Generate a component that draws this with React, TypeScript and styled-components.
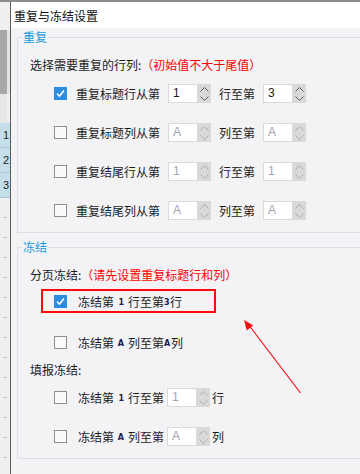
import React from 'react';
import styled, { createGlobalStyle } from 'styled-components';

// ---------------------------------------------------------------------------
// Repeat / freeze settings dialog, sitting over a spreadsheet
// ---------------------------------------------------------------------------

const GlobalStyle = createGlobalStyle`
  html, body {
    margin: 0;
    padding: 0;
  }
  body {
    font-family: 'Noto Sans CJK SC', 'Noto Sans', sans-serif;
    font-size: 12px;
    color: #1b1b1b;
  }
`;

const ChevronUp = ({ color }: { color: string }) => (
  <svg width="9" height="5" viewBox="0 0 9 5">
    <polyline points="0.5,4.5 4.5,0.5 8.5,4.5" fill="none" stroke={color} strokeWidth="1" />
  </svg>
);

const ChevronDown = ({ color }: { color: string }) => (
  <svg width="9" height="5" viewBox="0 0 9 5">
    <polyline points="0.5,0.5 4.5,4.5 8.5,0.5" fill="none" stroke={color} strokeWidth="1" />
  </svg>
);

const Checkbox = ({ checked }: { checked?: boolean }) => (
  <CheckBoxBox $checked={!!checked}>
    {checked && (
      <svg width="11" height="11" viewBox="0 0 11 11">
        <polyline points="2,5.5 4.5,8 9,2.5" fill="none" stroke="#fff" strokeWidth="1.6" />
      </svg>
    )}
  </CheckBoxBox>
);

const Spinner = ({ value, disabled }: { value: string; disabled?: boolean }) => (
  <SpinBox>
    <SpinInput $disabled={!!disabled}>{value}</SpinInput>
    <SpinButtons>
      <ChevronUp color={disabled ? '#ababab' : '#5a5a5a'} />
      <ChevronDown color={disabled ? '#ababab' : '#5a5a5a'} />
    </SpinButtons>
  </SpinBox>
);

const repeatRows = [
  { label: '重复标题行从第', from: '1', to: '3', mid: '行至第', checked: true },
  { label: '重复标题列从第', from: 'A', to: 'A', mid: '列至第' },
  { label: '重复结尾行从第', from: '1', to: '1', mid: '行至第' },
  { label: '重复结尾列从第', from: 'A', to: 'A', mid: '列至第' },
];

const App = () => {
  return (
    <>
      <GlobalStyle />
      <Screen>
        <SheetStrip>
          <SheetBlock $h={28} $bg="#efefef" />
          <SheetBlock $h={64} $bg="#a7a7a7" $edge="#e4e4e4" />
          <SheetBlock $h={29} $bg="#e6e6e6" $edge="#f0f0f0" />
          <RowHead $h={25}>1</RowHead>
          <RowHead $h={25}>2</RowHead>
          <RowHead $h={25}>3</RowHead>
          {Array.from({ length: 14 }).map((_, i) => (
            <EmptyRowHead key={i} />
          ))}
        </SheetStrip>

        <Dialog>
          <TitleBar>重复与冻结设置</TitleBar>
          <Body>
            <Group>
              <Legend>重复</Legend>
              <GroupContent>
                <Heading $h={19} $top={10}>
                  选择需要重复的行列:<Hint>（初始值不大于尾值）</Hint>
                </Heading>
                {repeatRows.map((r) => (
                  <Row key={r.label} $h={39} $gap={8}>
                    <Checkbox checked={r.checked} />
                    <Label $left={1}>{r.label}</Label>
                    <Spinner value={r.from} disabled={!r.checked} />
                    <Label>{r.mid}</Label>
                    <Spinner value={r.to} disabled={!r.checked} />
                  </Row>
                ))}
              </GroupContent>
            </Group>

            <Group $top={6}>
              <Legend>冻结</Legend>
              <GroupContent>
                <Heading $h={19} $top={10}>
                  分页冻结:<Hint>（请先设置重复标题行和列）</Hint>
                </Heading>
                <Highlight>
                  <Row $h={20} $gap={11} $indent={11}>
                    <Checkbox checked />
                    <Label>
                      冻结第<Num $w={14}>1</Num>行至第<Num $w={6}>3</Num>行
                    </Label>
                  </Row>
                </Highlight>
                <Row $h={38} $gap={11}>
                  <Checkbox />
                  <Label>
                    冻结第<Num $w={14}>A</Num>列至第<Num $w={7}>A</Num>列
                  </Label>
                </Row>
                <Heading $h={17}>填报冻结:</Heading>
                <Row $h={39} $gap={11}>
                  <Checkbox />
                  <Label>
                    冻结第<Num $w={14}>1</Num>行至第
                  </Label>
                  <Tail>
                    <Spinner value="1" disabled />
                    <Label>行</Label>
                  </Tail>
                </Row>
                <Row $h={39} $gap={11}>
                  <Checkbox />
                  <Label>
                    冻结第<Num $w={14}>A</Num>列至第
                  </Label>
                  <Tail>
                    <Spinner value="A" disabled />
                    <Label>列</Label>
                  </Tail>
                </Row>
              </GroupContent>
            </Group>
          </Body>
        </Dialog>

        {/* red annotation arrow drawn over the dialog */}
        <Annotation width="360" height="474" viewBox="0 0 360 474">
          <line x1="300.5" y1="391" x2="248" y2="322" stroke="#f01010" strokeWidth="1.2" />
          <polygon points="244,318 253.2,323.6 246.8,328.4" fill="#f01010" />
        </Annotation>
      </Screen>
    </>
  );
};

// ---------------------------------------------------------------------------
// Styled components
// ---------------------------------------------------------------------------

const Screen = styled.div`
  position: relative;
  display: flex;
  width: 360px;
  height: 474px;
  overflow: hidden;
  box-sizing: border-box;
  border-top: 2px solid #8c8c8c;
  background: #efefef;
`;

const SheetStrip = styled.div`
  display: flex;
  flex-direction: column;
  width: 10px;
  flex-shrink: 0;
`;

const SheetBlock = styled.div<{ $h: number; $bg: string; $edge?: string }>`
  height: ${({ $h }) => $h}px;
  flex-shrink: 0;
  box-sizing: border-box;
  background: ${({ $bg }) => $bg};
  border-right: ${({ $edge }) => ($edge ? `3px solid ${$edge}` : 'none')};
`;

const RowHead = styled.div<{ $h: number }>`
  height: ${({ $h }) => $h}px;
  flex-shrink: 0;
  box-sizing: border-box;
  background: #c5dfea;
  border-bottom: 1px solid #a9c6d3;
  font-family: 'Liberation Sans', Arial, sans-serif;
  font-size: 11px;
  line-height: 24px;
  color: #222;
  text-align: right;
  padding-right: 1px;
`;

const EmptyRowHead = styled.div`
  height: 20px;
  flex-shrink: 0;
  box-sizing: border-box;
  background: #efefef;
  border-bottom: 1px solid transparent;
  position: relative;

  &::after {
    content: '';
    position: absolute;
    right: 3px;
    bottom: -1px;
    width: 4px;
    height: 1px;
    background: #c4c4c4;
  }
`;

const Dialog = styled.div`
  flex: 1;
  display: flex;
  flex-direction: column;
  border-left: 1px solid #5b5b5b;
  background: #f3f3f6;
  min-width: 0;
`;

const TitleBar = styled.div`
  height: 26px;
  flex-shrink: 0;
  display: flex;
  align-items: center;
  padding-left: 3px;
  background: #fff;
  font-size: 12px;
  color: #111;
`;

const Body = styled.div`
  flex: 1;
  padding: 1px 0 0 6px;
`;

const Group = styled.fieldset<{ $top?: number }>`
  margin: ${({ $top }) => $top || 0}px -30px 0 0;
  padding: 0 0 2px 4px;
  border: 1px solid #dfdfe3;
  min-width: 0;
`;

const Legend = styled.legend`
  padding: 0 1px;
  font-size: 12px;
  line-height: 16px;
  color: #1a9ad8;
`;

const GroupContent = styled.div`
  display: flex;
  flex-direction: column;
  padding-left: 8px;
`;

const Heading = styled.div<{ $h: number; $top?: number }>`
  height: ${({ $h }) => $h}px;
  margin-top: ${({ $top }) => $top || 0}px;
  display: flex;
  align-items: center;
  white-space: nowrap;
`;

const Hint = styled.span`
  color: #ff0000;
`;

const Row = styled.div<{ $h: number; $gap: number; $indent?: number }>`
  height: ${({ $h }) => $h}px;
  display: flex;
  align-items: center;
  gap: ${({ $gap }) => $gap}px;
  padding-left: ${({ $indent }) => ($indent === undefined ? 24 : $indent)}px;
  white-space: nowrap;
`;

const Highlight = styled.div`
  margin: 5px 0 10px 11px;
  width: 175px;
  box-sizing: border-box;
  border: 2px solid #ff0a0a;
`;

const CheckBoxBox = styled.span<{ $checked: boolean }>`
  width: 13px;
  height: 13px;
  flex-shrink: 0;
  box-sizing: border-box;
  display: flex;
  align-items: center;
  justify-content: center;
  border: 1px solid ${({ $checked }) => ($checked ? '#2a8de4' : '#8e8e8e')};
  background: ${({ $checked }) => ($checked ? '#2a8de4' : '#fafafa')};
`;

const Label = styled.span<{ $left?: number }>`
  margin-left: ${({ $left }) => $left || 0}px;
  display: inline-flex;
  align-items: center;
`;

const Num = styled.span<{ $w: number }>`
  display: inline-block;
  width: ${({ $w }) => $w}px;
  padding-right: ${({ $w }) => ($w > 10 ? 4 : 1)}px;
  margin-top: 3px;
  box-sizing: border-box;
  text-align: right;
  font-family: 'DejaVu Sans', sans-serif;
  font-size: 8px;
  font-weight: bold;
  line-height: 8px;
  color: #202050;
`;

const Tail = styled.span`
  display: inline-flex;
  align-items: center;
  gap: 2px;
  margin-left: -8px;
`;

const SpinBox = styled.span`
  display: inline-flex;
  height: 19px;
  flex-shrink: 0;
`;

const SpinInput = styled.span<{ $disabled: boolean }>`
  width: 29px;
  box-sizing: border-box;
  border: 1px solid #dadada;
  border-right: none;
  background: #fff;
  padding-left: 4px;
  line-height: 17px;
  font-family: 'Liberation Sans', Arial, sans-serif;
  font-size: 12px;
  color: ${({ $disabled }) => ($disabled ? '#a2a2b4' : '#1a1a1a')};
`;

const SpinButtons = styled.span`
  width: 14px;
  display: flex;
  flex-direction: column;
  align-items: center;
  justify-content: center;
  gap: 4px;
  background: #d9d9d9;
`;

const Annotation = styled.svg`
  position: absolute;
  left: 0;
  top: 0;
  pointer-events: none;
`;

export default App;
